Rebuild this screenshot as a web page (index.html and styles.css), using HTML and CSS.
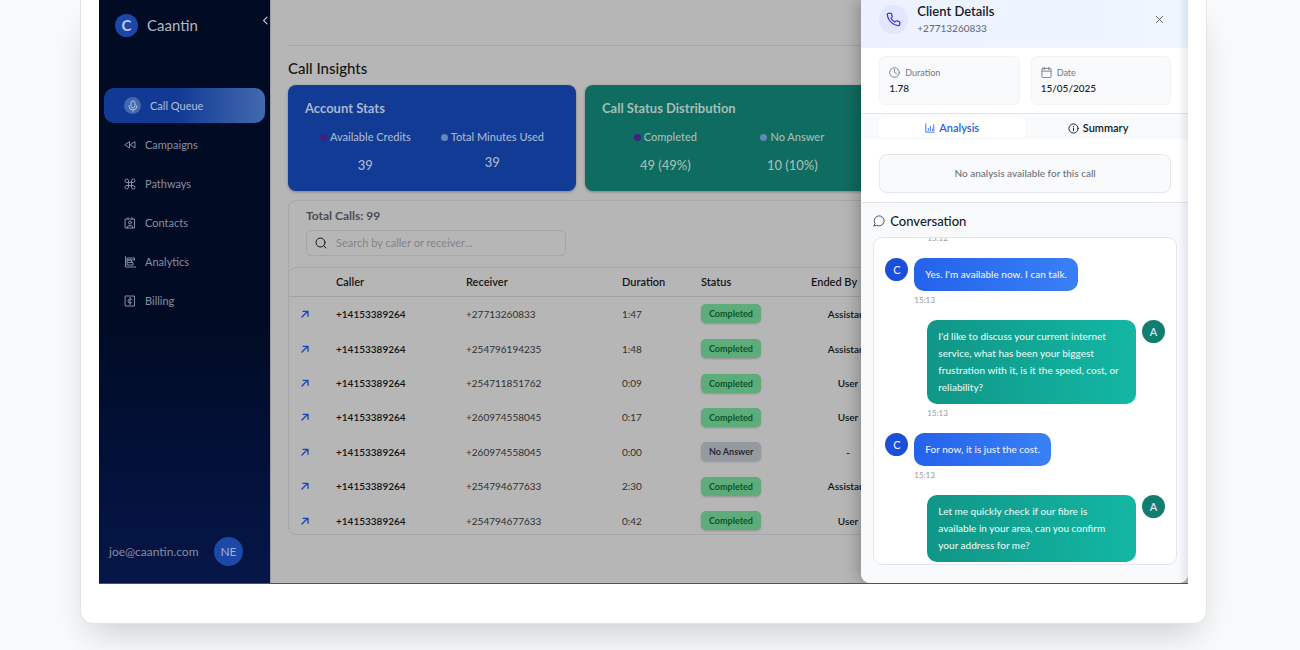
FILE: index.html
```html
<!DOCTYPE html>
<html lang="en">
<head>
<meta charset="utf-8">
<title>Caantin – Call Queue</title>
<link rel="stylesheet" href="styles.css">
</head>
<body>
<div class="frame">
  <div class="app">
    <aside class="sidebar">
      <div class="brand">
        <span class="brand-mark">C</span>
        <span>Caantin</span>
        <button class="collapse" type="button" aria-label="Collapse sidebar"><svg width="9" height="9" viewBox="0 0 24 24"><path d="M16 3L7 12L16 21"/></svg></button>
      </div>
      <nav class="nav">
        <a class="nav-link active" href="#queue"><span class="mic"><svg width="12" height="12" viewBox="0 0 24 24"><rect x="8" y="2" width="8" height="14" rx="4"/><path d="M4 11v1a8 8 0 0 0 16 0v-1M12 20v3"/></svg></span>Call Queue</a>
        <a class="nav-link" href="#campaigns"><svg width="12" height="12" viewBox="0 0 24 24"><path d="M11 6v12L2 12zM22 6v12l-9-6z"/></svg>Campaigns</a>
        <a class="nav-link" href="#pathways"><svg width="12" height="12" viewBox="0 0 24 24"><path d="M9 9V5.500A3.500 3.500 0 1 0 5.500 9H18.500A3.500 3.500 0 1 0 15 5.500V18.500A3.500 3.500 0 1 0 18.500 15H5.500A3.500 3.500 0 1 0 9 18.500z"/></svg>Pathways</a>
        <a class="nav-link" href="#contacts"><svg width="12" height="12" viewBox="0 0 24 24"><path d="M3 4h18v18H3zM8 1v3M16 1v3M7 22v-2q0-3 5-3t5 3v2"/><circle cx="12" cy="11" r="3"/></svg>Contacts</a>
        <a class="nav-link" href="#analytics"><svg width="12" height="12" viewBox="0 0 24 24"><path d="M3 1v21h20M7 4h14v4H7zM7 8h8v5H7zM7 13h11v5H7z"/></svg>Analytics</a>
        <a class="nav-link" href="#billing"><svg width="12" height="12" viewBox="0 0 24 24"><path d="M3 2h18v20H3zM16 9.500q-1-1.500-4-1.500-4 0-4 4t4 4q3 0 4-1.500M12 5v14"/></svg>Billing</a>
      </nav>
      <div class="account"><span>joe@caantin.com</span><span class="initials">NE</span></div>
    </aside>

    <main class="main">
      <div class="topbar"></div>
      <h1>Call Insights</h1>
      <div class="cards">
        <section class="card blue">
          <h2>Account Stats</h2>
          <dl class="stats">
            <div class="stat"><dt><i class="dot purple"></i>Available Credits</dt><dd>39</dd></div>
            <div class="stat tight"><dt><i class="dot"></i>Total Minutes Used</dt><dd>39</dd></div>
          </dl>
        </section>
        <section class="card green">
          <h2>Call Status Distribution</h2>
          <dl class="stats">
            <div class="stat"><dt><i class="dot purple"></i>Completed</dt><dd>49 (49%)</dd></div>
            <div class="stat"><dt><i class="dot"></i>No Answer</dt><dd>10 (10%)</dd></div>
          </dl>
        </section>
      </div>
      <section class="calls">
        <h2>Total Calls: 99</h2>
        <label class="search"><svg width="12" height="12" viewBox="0 0 24 24"><circle cx="11" cy="11" r="9"/><path d="M18 18l4 4"/></svg><input type="search" aria-label="Search calls" placeholder="Search by caller or receiver..."></label>
        <div class="table-wrap">
          <table>
            <colgroup><col class="c-open"><col class="c-caller"><col class="c-receiver"><col class="c-duration"><col class="c-status"><col class="c-ended"><col></colgroup>
            <thead><tr><th></th><th>Caller</th><th>Receiver</th><th>Duration</th><th>Status</th><th>Ended By</th><th></th></tr></thead>
            <tbody>
              <tr><td><a href="#c1" aria-label="Open call"><svg width="8" height="8" viewBox="0 0 12 12"><path d="M1.500 10.500L10 2M3 2h7.500v7.500"/></svg></a></td><td>+14153389264</td><td>+27713260833</td><td>1:47</td><td><span class="badge">Completed</span></td><td>Assistant</td><td></td></tr>
              <tr><td><a href="#c2" aria-label="Open call"><svg width="8" height="8" viewBox="0 0 12 12"><path d="M1.500 10.500L10 2M3 2h7.500v7.500"/></svg></a></td><td>+14153389264</td><td>+254796194235</td><td>1:48</td><td><span class="badge">Completed</span></td><td>Assistant</td><td></td></tr>
              <tr><td><a href="#c3" aria-label="Open call"><svg width="8" height="8" viewBox="0 0 12 12"><path d="M1.500 10.500L10 2M3 2h7.500v7.500"/></svg></a></td><td>+14153389264</td><td>+254711851762</td><td>0:09</td><td><span class="badge">Completed</span></td><td>User</td><td></td></tr>
              <tr><td><a href="#c4" aria-label="Open call"><svg width="8" height="8" viewBox="0 0 12 12"><path d="M1.500 10.500L10 2M3 2h7.500v7.500"/></svg></a></td><td>+14153389264</td><td>+260974558045</td><td>0:17</td><td><span class="badge">Completed</span></td><td>User</td><td></td></tr>
              <tr><td><a href="#c5" aria-label="Open call"><svg width="8" height="8" viewBox="0 0 12 12"><path d="M1.500 10.500L10 2M3 2h7.500v7.500"/></svg></a></td><td>+14153389264</td><td>+260974558045</td><td>0:00</td><td><span class="badge none">No Answer</span></td><td>-</td><td></td></tr>
              <tr><td><a href="#c6" aria-label="Open call"><svg width="8" height="8" viewBox="0 0 12 12"><path d="M1.500 10.500L10 2M3 2h7.500v7.500"/></svg></a></td><td>+14153389264</td><td>+254794677633</td><td>2:30</td><td><span class="badge">Completed</span></td><td>Assistant</td><td></td></tr>
              <tr><td><a href="#c7" aria-label="Open call"><svg width="8" height="8" viewBox="0 0 12 12"><path d="M1.500 10.500L10 2M3 2h7.500v7.500"/></svg></a></td><td>+14153389264</td><td>+254794677633</td><td>0:42</td><td><span class="badge">Completed</span></td><td>User</td><td></td></tr>
            </tbody>
          </table>
        </div>
      </section>
    </main>

    <aside class="panel">
      <header class="panel-head">
        <span class="phone"><svg width="15" height="15" viewBox="0 0 24 24"><path d="M22 16.920v3a2 2 0 0 1-2.180 2 19.790 19.790 0 0 1-8.630-3.070 19.500 19.500 0 0 1-6-6 19.790 19.790 0 0 1-3.070-8.670A2 2 0 0 1 4.110 2h3a2 2 0 0 1 2 1.720c.127.960.361 1.903.7 2.810a2 2 0 0 1-.45 2.110L8.090 9.910a16 16 0 0 0 6 6l1.270-1.270a2 2 0 0 1 2.110-.45c.907.339 1.850.573 2.810.7A2 2 0 0 1 22 16.920z"/></svg></span>
        <div class="client"><h2>Client Details</h2><p>+27713260833</p></div>
        <button class="close" type="button" aria-label="Close"><svg width="11" height="11" viewBox="0 0 24 24"><path d="M5 5l14 14M19 5L5 19"/></svg></button>
      </header>
      <div class="facts">
        <div class="fact"><span><svg width="11" height="11" viewBox="0 0 24 24"><circle cx="12" cy="12" r="10.500"/><path d="M12 5v7l5 3"/></svg>Duration</span><strong>1.78</strong></div>
        <div class="fact"><span><svg width="11" height="11" viewBox="0 0 24 24"><rect x="2" y="3" width="20" height="20" rx="2"/><path d="M2 9h20M7 0v6M17 0v6"/></svg>Date</span><strong>15/05/2025</strong></div>
      </div>
      <div class="tabs" role="tablist">
        <button class="tab selected" type="button" role="tab" aria-selected="true"><svg width="10" height="10" viewBox="0 0 24 24"><path d="M2 2v20h20M8 18v-5M13 18V8M18 18v-3M21 18V4"/></svg>Analysis</button>
        <button class="tab" type="button" role="tab" aria-selected="false"><svg width="11" height="11" viewBox="0 0 24 24"><circle cx="12" cy="12" r="10"/><path d="M12 17v-6M12 8V7"/></svg>Summary</button>
      </div>
      <div class="analysis"><p>No analysis available for this call</p></div>
      <section class="conversation">
        <h2><svg width="12" height="12" viewBox="0 0 24 24"><path d="M3.500 16.500A10 10 0 1 1 7.500 20.500L2 22z"/></svg>Conversation</h2>
        <div class="chat">
          <ol class="messages">
            <li class="agent"><div class="body"><time>15:12</time></div></li>
            <li class="client-msg"><span class="avatar">C</span><div class="body"><p>Yes. I'm available now. I can talk.</p><time>15:13</time></div></li>
            <li class="agent"><div class="body"><p>I'd like to discuss your current internet service, what has been your biggest frustration with it, is it the speed, cost, or reliability?</p><time>15:13</time></div><span class="avatar">A</span></li>
            <li class="client-msg"><span class="avatar">C</span><div class="body"><p>For now, it is just the cost.</p><time>15:13</time></div></li>
            <li class="agent"><div class="body"><p>Let me quickly check if our fibre is available in your area, can you confirm your address for me?</p></div><span class="avatar">A</span></li>
          </ol>
        </div>
      </section>
    </aside>
  </div>
</div>
</body>
</html>
```
FILE: styles.css
```css
* { box-sizing: border-box; }
h1, h2, p, dl, dd, ol { margin: 0; padding: 0; font-weight: 500; }
body {
  margin: 0;
  min-height: 100vh;
  padding: 0 93px 27px 80px;
  overflow: hidden;
  background: #f9fafc;
  font-family: Lato, "Open Sans", sans-serif;
  font-size: 11px;
  line-height: 16px;
}
button { border: 0; padding: 0; background: none; font: inherit; cursor: pointer; }
a { color: inherit; text-decoration: none; }
svg { flex: none; fill: none; stroke: currentColor; stroke-width: 2; stroke-linecap: round; stroke-linejoin: round; }

.frame {
  padding: 0 18px 39px;
  background: #fff;
  border: 1px solid #e2e4e6;
  border-top: 0;
  border-radius: 0 0 13px 13px;
  box-shadow: 0 18px 36px -9px rgba(0, 0, 0, .18);
}
.app {
  position: relative;
  display: flex;
  background: #b6b6b6;
  border-bottom: 1px solid #55553c;
}

.sidebar {
  display: flex;
  flex-direction: column;
  width: 171px;
  flex: none;
  padding: 12px 5px 17px 5px;
  background: linear-gradient(#010b24 55%, #03113a 80%, #061647);
  color: #868fa1;
}
.brand { display: flex; align-items: center; gap: 9px; padding-left: 11px; color: #b5b8bf; font-size: 15px; line-height: 26px; }
.brand-mark { width: 23px; height: 23px; border-radius: 50%; background: #1a47a8; color: #c0c9dd; line-height: 23px; text-align: center; font-weight: 700; }
.collapse { display: flex; margin: -9px -5px 0 auto; color: #c3c5cb; }
.collapse svg { stroke-width: 3; }
.nav { display: flex; flex-direction: column; gap: 4px; margin-top: 50px; }
.nav-link { display: flex; align-items: center; gap: 9px; height: 35px; padding-left: 20px; border-radius: 10px; }
.nav-link.active { width: 161px; background: linear-gradient(90deg, #123a94 45%, #426aaf); color: #b3bfd9; }
.mic { display: flex; align-items: center; justify-content: center; width: 17px; height: 17px; border-radius: 50%; background: #4368b0; }
.account { display: flex; align-items: center; justify-content: space-between; margin-top: auto; padding: 0 22px 0 5px; font-size: 12px; }
.initials { width: 29px; height: 29px; border-radius: 50%; background: #1c48a8; color: #a2b0d0; line-height: 29px; text-align: center; }

.main { flex: 1; min-width: 0; padding: 0 18px 48px 17px; border-left: 1px solid #999ca3; color: #151515; }
.topbar { height: 46px; border-bottom: 1px solid #a5a5a5; }
.main h1 { margin: 11px 0 6px; font-size: 15px; line-height: 22px; }
.cards { display: grid; grid-template-columns: repeat(3, 1fr); gap: 9px; }
.card { padding: 15px 17px 18px; border-radius: 8px; box-shadow: 0 1px 3px rgba(0, 0, 0, .3); color: #a9b6cf; }
.blue { background: #123b95; }
.green { background: #0f6c60; color: #a5bdb8; }
.card h2 { font-size: 13px; font-weight: 700; line-height: 17px; }
.stats { display: flex; justify-content: space-around; margin-top: 12px; font-size: 13px; }
.stat { display: flex; flex-direction: column; align-items: center; gap: 12px; }
.stat.tight { gap: 9px; }
.stat dt { display: flex; align-items: center; gap: 3px; font-size: 11px; }
.dot { width: 7px; height: 7px; border-radius: 50%; background: #6487b6; }
.dot.purple { background: #42207f; }

.calls { margin-top: 9px; border: 1px solid #a6a7a9; border-radius: 8px; overflow: hidden; }
.calls h2 { padding: 6px 17px; color: #4a4e56; font-size: 12px; font-weight: 700; line-height: 17px; }
.search { display: flex; align-items: center; gap: 9px; width: 260px; height: 26px; margin: 0 17px 11px; padding: 0 8px; border: 1px solid #a5a6a8; border-radius: 5px; }
.search input { flex: 1; border: 0; padding: 0; outline: 0; background: none; font: inherit; }
.search input::placeholder { color: #828488; }
.table-wrap { height: 267px; overflow: hidden; border-top: 1px solid #a3a4a6; border-radius: 8px 8px 0 0; }
table { width: 100%; height: 270px; table-layout: fixed; border-collapse: collapse; font-size: 10px; line-height: 16px; }
.c-open { width: 35px; }
.c-caller { width: 130px; }
.c-receiver { width: 156px; }
.c-duration { width: 79px; }
.c-status { width: 110px; }
.c-ended { width: 98px; }
th, td { padding: 0 12px; text-align: left; }
th { height: 28px; border-bottom: 1px solid #a0a1a3; font-size: 11px; font-weight: 600; }
td { color: #303030; }
td:nth-child(2), td:nth-child(6) { color: #121212; font-weight: 600; }
td:nth-child(6) { text-align: center; }
td a { display: flex; color: #1849b4; }
td svg { stroke-width: 2; }
.badge { display: inline-block; padding: 2px 8px; border-radius: 5px; background: #5dac7a; color: #08562d; box-shadow: 0 1px 2px rgba(0, 0, 0, .2); font-size: 9px; font-weight: 700; line-height: 15px; }
.badge.none { background: #969aa0; color: #272b32; }

.panel {
  position: absolute;
  inset: 0 0 0 auto;
  display: flex;
  flex-direction: column;
  width: 30%;
  overflow: hidden;
  border-radius: 0 0 9px 9px;
  background: #fff;
  box-shadow: -3px 0 16px rgba(0, 0, 0, .25);
  clip-path: inset(0 0 0 -30px);
  color: #151b28;
}
.panel::after { content: ""; position: absolute; inset: 0 0 0 auto; width: 10px; background: linear-gradient(90deg, transparent, rgba(40, 50, 90, .1)); pointer-events: none; }
.panel-head { display: flex; align-items: center; gap: 9px; height: 48px; padding: 0 23px 9px 18px; background: linear-gradient(90deg, #edf1ff, #eef6ff); }
.phone { display: flex; align-items: center; justify-content: center; width: 29px; height: 29px; border-radius: 50%; background: #e0e7ff; color: #4a32dd; }
.client h2 { font-size: 13px; font-weight: 600; line-height: 17px; }
.client p { color: #697180; font-size: 10px; line-height: 16px; }
.close { display: flex; margin-left: auto; color: #565c66; }
.facts { display: grid; grid-template-columns: 1fr 1fr; gap: 11px; padding: 8px 17px 8px 18px; border-bottom: 1px solid #e2e5e8; }
.fact { padding: 8px 9px; border: 1px solid #f1f3f5; border-radius: 6px; background: #f9fafb; }
.fact span { display: flex; align-items: center; gap: 5px; color: #727985; font-size: 9px; line-height: 15px; }
.fact strong { display: block; font-size: 10px; font-weight: 500; line-height: 16px; }
.tabs { display: grid; grid-template-columns: 1fr 1fr; padding: 4px 17px 1px 18px; background: #f9fafb; }
.tab { display: flex; align-items: center; justify-content: center; gap: 4px; height: 20px; border-radius: 4px; color: #15181d; font-weight: 600; }
.tab.selected { background: #fff; color: #2460e4; box-shadow: 0 1px 2px rgba(0, 0, 0, .03); }
.analysis { padding: 15px 17px 9px 18px; }
.analysis p { padding: 11px; border: 1px solid #e3e6ea; border-radius: 8px; background: #f9fafb; color: #6c727c; font-size: 10px; line-height: 15px; text-align: center; }
.conversation { flex: 1; padding: 8px 11px 17px 12px; border-top: 1px solid #e2e5e9; background: #f9fafc; }
.conversation h2 { display: flex; align-items: center; gap: 5px; font-size: 13px; line-height: 20px; }
.conversation h2 svg { color: #555b65; }
.chat { margin-top: 6px; padding: 0 11px 2px; border: 1px solid #e3e6ea; border-radius: 9px; background: #fff; overflow: hidden; }
.messages { display: flex; flex-direction: column; gap: 14px; margin-top: -9px; list-style: none; font-size: 10px; }
.messages li { display: flex; align-items: flex-start; gap: 6px; }
.agent { padding-left: 42px; }
.agent .body { flex: 1; }
.body p { padding: 8px 11px; border-radius: 10px; background: linear-gradient(90deg, #2462eb, #3a80f4); color: #e9f0ff; line-height: 17px; }
.agent p { background: linear-gradient(90deg, #109687, #13b7a4); color: #e2f7f3; }
.body time { display: block; margin-top: 3px; color: #9da2aa; font-size: 8px; line-height: 12px; }
.avatar { width: 23px; height: 23px; border-radius: 50%; background: #1c4fd8; color: #e4ebff; font-size: 11px; line-height: 23px; text-align: center; }
.agent .avatar { background: #117d70; }
```
